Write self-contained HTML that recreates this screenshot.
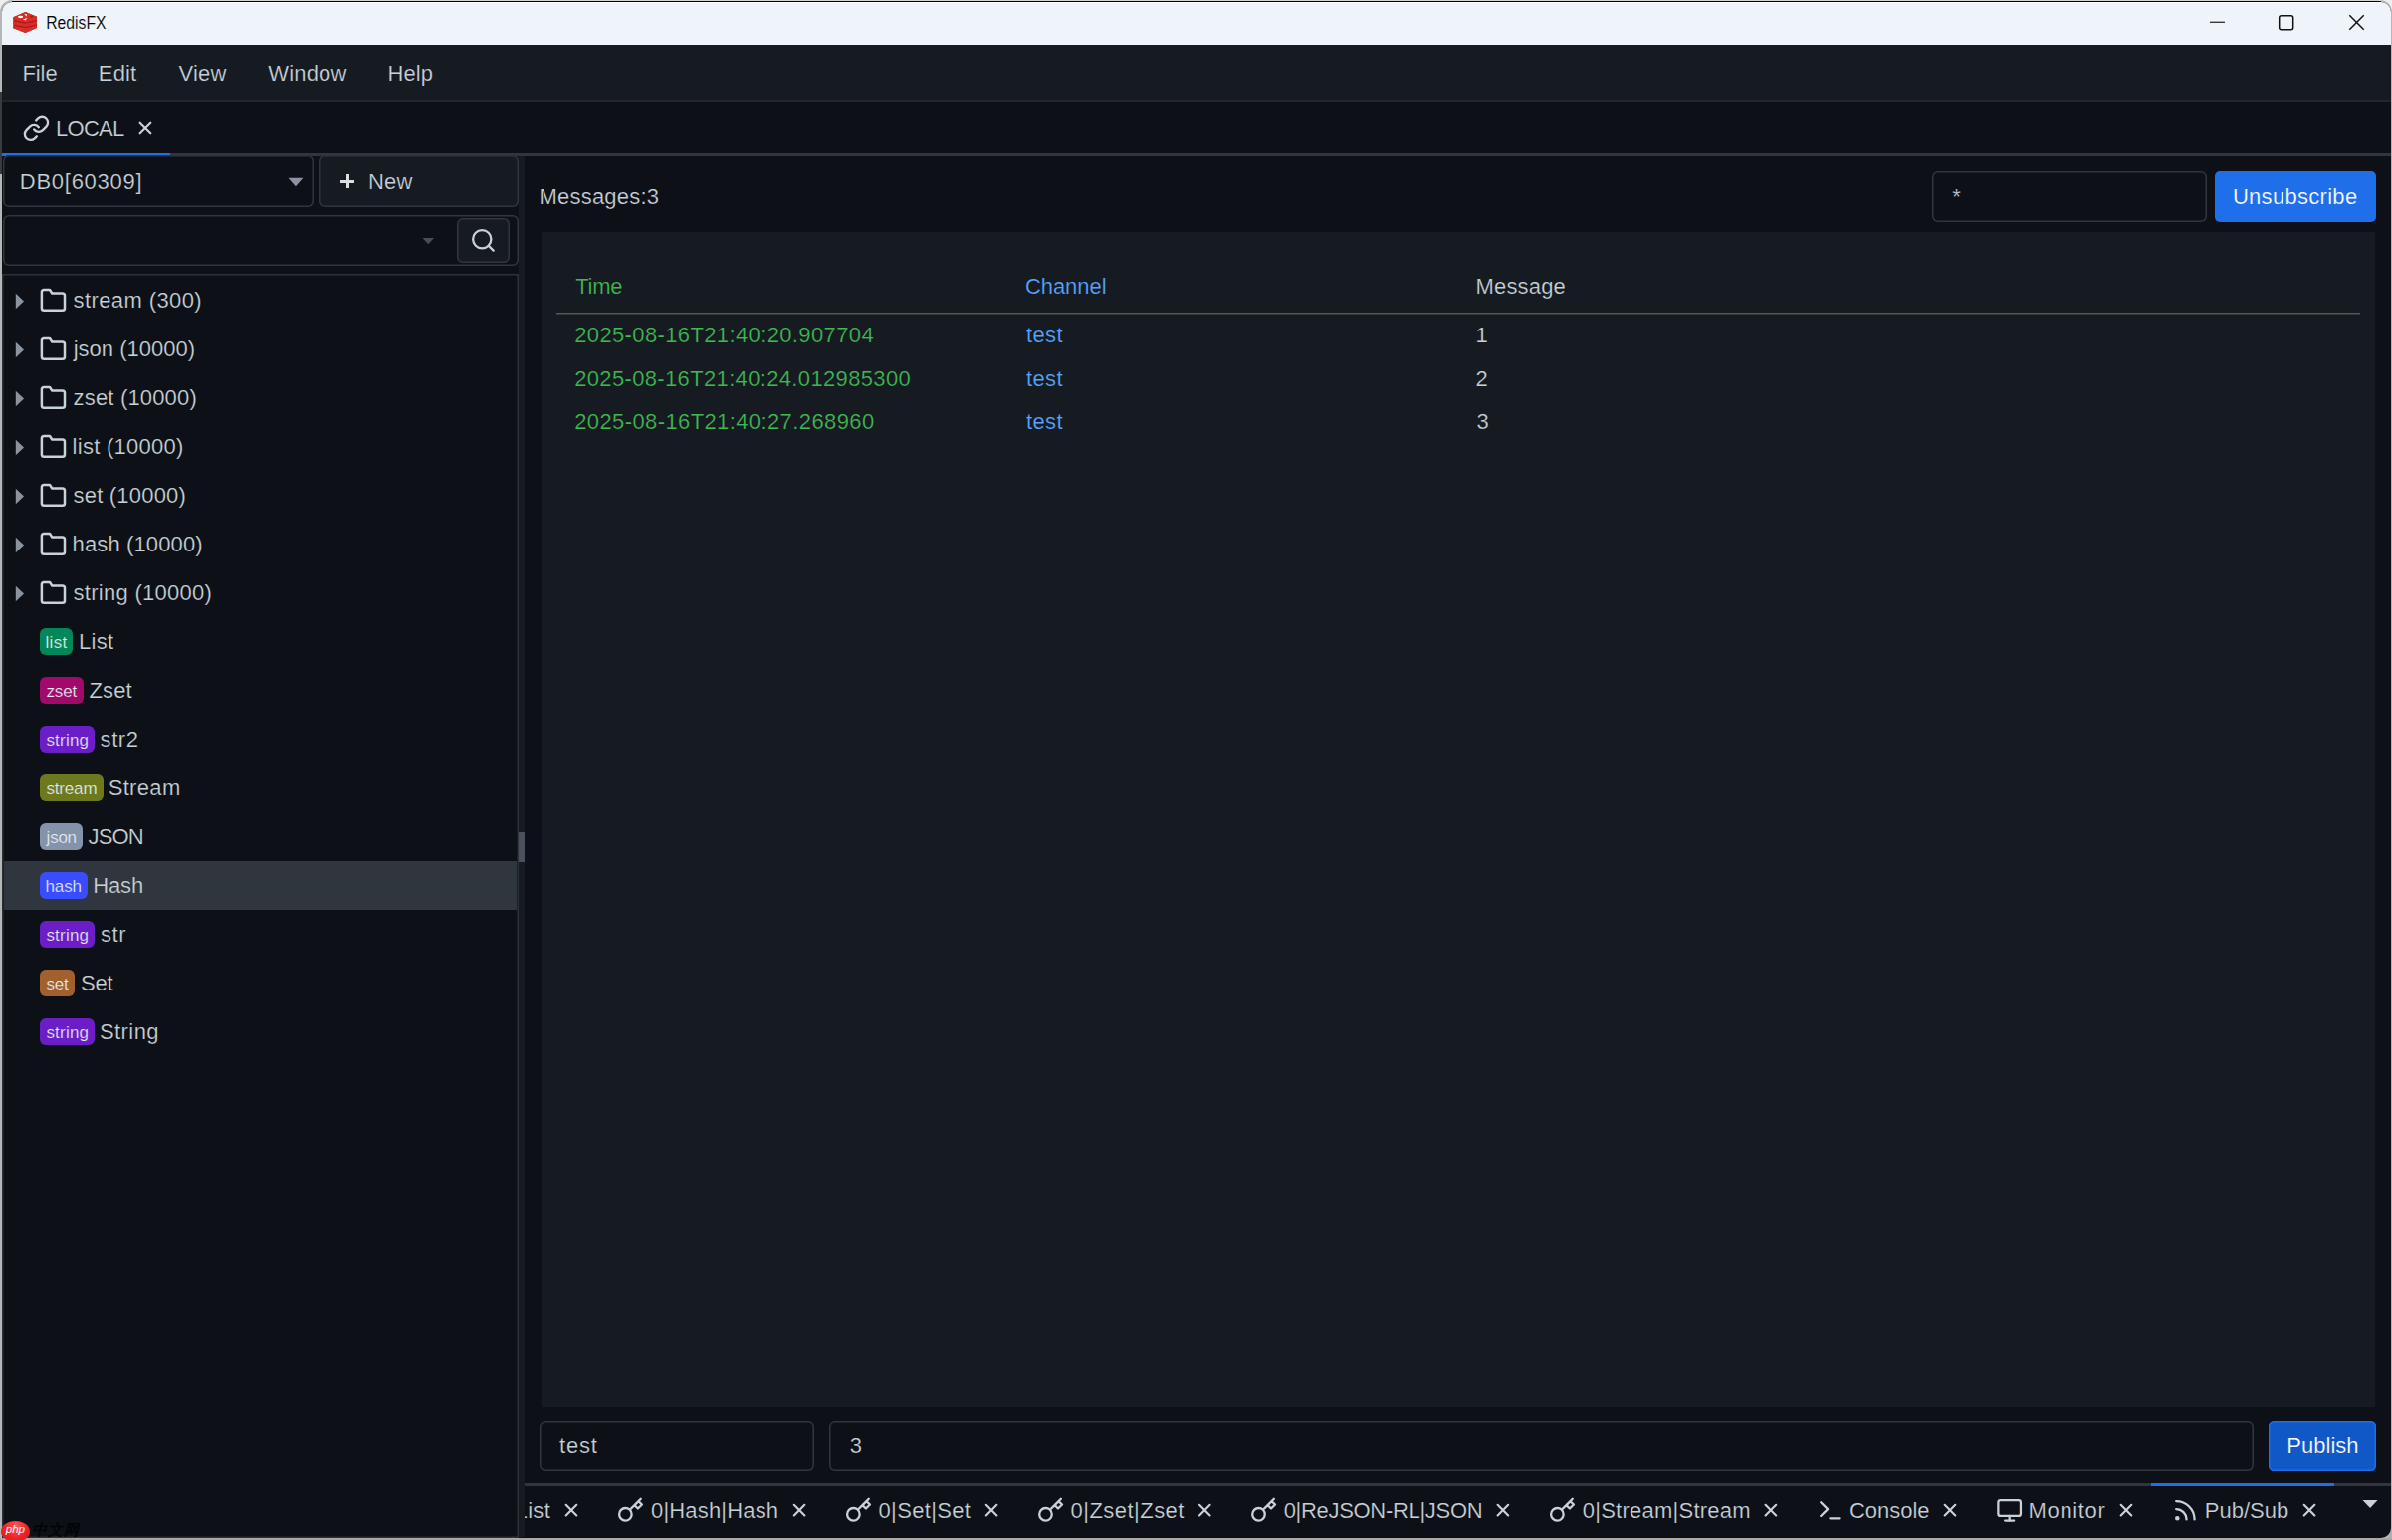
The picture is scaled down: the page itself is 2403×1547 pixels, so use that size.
<!DOCTYPE html>
<html lang="en"><head><meta charset="utf-8"><title>RedisFX</title><style>
html,body{margin:0;padding:0;background:#b0b0b0}
body{width:2403px;height:1547px;position:relative;overflow:hidden;font-family:"Liberation Sans",sans-serif}
.b{position:absolute;box-sizing:border-box}
.ic{position:absolute;display:block;overflow:visible}
.t{position:absolute;white-space:pre;line-height:1;display:block}
</style></head>
<body>
<div class="chrome">
<div class="b " style="left:0px;top:0px;width:14px;height:14px;background:#efefef"></div>
<div class="b " style="left:2389px;top:0px;width:14px;height:14px;background:#efefef"></div>
<div class="b frame" style="left:0px;top:0px;width:2403px;height:1547px;background:#b6b6b6;border-radius:12px 12px 11px 3px"></div>
<div class="b " style="left:0px;top:92px;width:2px;height:83px;background:#3a3b3d"></div>
<div class="b " style="left:12px;top:0px;width:2380px;height:1px;background:#d6d6d6"></div>
<div class="b " style="left:12px;top:1px;width:2380px;height:1px;background:#000"></div>
<div class="b win" style="left:2px;top:2px;width:2399.5px;height:1542.6px;background:#0d1117;border-radius:10px 10px 10px 2px;overflow:hidden"><div class="b titlebar" style="left:0px;top:0px;width:2400px;height:43px;background:#eff3fa"></div><div class="b " style="left:10px;top:0px;width:2380px;height:1px;background:#fff"></div><div class="b menubar" style="left:0px;top:43px;width:2400px;height:57px;background:#161b22"></div><div class="b " style="left:0px;top:98.4px;width:2400px;height:1.7999999999999972px;background:#21262d"></div></div>
</div>
<header class="titlebar">
<svg class="ic" style="left:12px;top:11px" width="26" height="23" viewBox="0 0 26 23">
<polygon points="1.3,6.3 13.5,1 25,5.8 25,17 13.5,22 1.3,17.3" fill="#a51e20"/>
<polygon points="1.3,6.3 13.5,1 25,5.8 25,8.9 13.5,11.5 1.3,9" fill="#da2c22"/>
<polygon points="1.3,10.3 13.5,12.8 25,10.2 25,13.3 13.5,15.9 1.3,13.4" fill="#d92d27"/>
<polygon points="1.3,14.7 13.5,17.2 25,14.6 25,17 13.5,22 1.3,17.3" fill="#d92d27"/>
<ellipse cx="8.6" cy="6" rx="2.7" ry="1.15" fill="#fff"/>
<polygon points="12.2,3.1 15.3,3.3 14.6,5.4" fill="#fbe9e8"/>
<polygon points="10.9,8.5 15.1,7 13.8,9.6" fill="#fff"/>
<ellipse cx="19.8" cy="5.7" rx="1.1" ry="0.8" fill="#7a1512"/>
</svg>
<svg class="ic" style="left:2210px;top:8px" width="180" height="30" viewBox="0 0 180 30" fill="none" stroke="#111" stroke-width="1.5">
<line x1="10" y1="14.25" x2="25" y2="14.25" stroke-width="1.15"/>
<rect x="79.7" y="7.7" width="14" height="14" rx="2"/>
<line x1="150.3" y1="7.3" x2="164.7" y2="21.7"/><line x1="164.7" y1="7.3" x2="150.3" y2="21.7"/>
</svg>
<span class="t " style="left:45.80px;top:14.00px;font-size:18px;color:#000;letter-spacing:0.000px;transform:scaleX(0.8748);transform-origin:1.00px 0;-webkit-text-stroke:0.15px #eff3fa;">RedisFX</span>
</header>
<nav class="menubar">
<span class="t menu" style="left:22.40px;top:63.00px;font-size:22px;color:#c9d1d9;letter-spacing:-0.071px;-webkit-text-stroke:0.22px #161b22;">File</span>
<span class="t menu" style="left:98.80px;top:63.00px;font-size:22px;color:#c9d1d9;letter-spacing:0.168px;-webkit-text-stroke:0.22px #161b22;">Edit</span>
<span class="t menu" style="left:179.60px;top:63.00px;font-size:22px;color:#c9d1d9;letter-spacing:0.134px;-webkit-text-stroke:0.22px #161b22;">View</span>
<span class="t menu" style="left:269.20px;top:63.00px;font-size:22px;color:#c9d1d9;letter-spacing:0.188px;-webkit-text-stroke:0.22px #161b22;">Window</span>
<span class="t menu" style="left:389.60px;top:63.00px;font-size:22px;color:#c9d1d9;letter-spacing:0.063px;-webkit-text-stroke:0.22px #161b22;">Help</span>
</nav>
<div class="connection-tabs">
<div class="b " style="left:2px;top:154px;width:2399.5px;height:3px;background:#30363d"></div>
<div class="b " style="left:2px;top:154px;width:169px;height:3px;background:#1f6feb"></div>
<svg class="ic" style="left:22px;top:115px" width="30" height="30" viewBox="0 0 30 30" fill="none" stroke="#c9d1d9" stroke-width="2" stroke-linecap="round" stroke-linejoin="round"><g transform="translate(0.50 0.35) scale(1.1667)"><path d="M10 13a5 5 0 0 0 7.54.54l3-3a5 5 0 0 0-7.07-7.07l-1.72 1.71"/><path d="M14 11a5 5 0 0 0-7.54-.54l-3 3a5 5 0 0 0 7.07 7.07l1.71-1.71"/></g></svg>
<svg class="ic" style="left:135px;top:118px" width="23" height="23" viewBox="0 0 23 23" fill="none" stroke="#c9d1d9" stroke-width="2.45" stroke-linecap="round" stroke-linejoin="round"><g transform="translate(0.28 0.33) scale(0.8893)"><line x1="18" y1="6" x2="6" y2="18"/><line x1="6" y1="6" x2="18" y2="18"/></g></svg>
<span class="t " style="left:56.00px;top:119.00px;font-size:22px;color:#c9d1d9;letter-spacing:-0.727px;-webkit-text-stroke:0.22px #0d1117;">LOCAL</span>
</div>
<aside class="sidebar">
<div class="b sel" style="left:3px;top:156px;width:312px;height:52px;box-shadow:inset 0 0 0 1.5px #30363d;border-radius:6px;background:#0d1117"></div>
<svg class="ic" style="left:289px;top:178px" width="16" height="10" viewBox="0 0 16 10"><polygon points="0.50,0.80 15.40,0.80 7.95,9.20" fill="#8d92a3"/></svg>
<div class="b btn" style="left:320px;top:156px;width:201px;height:52px;box-shadow:inset 0 0 0 1.5px #30363d;border-radius:6px;background:#161b22"></div>
<div class="b " style="left:348px;top:175px;width:3px;height:14.400000000000006px;background:#dddee0"></div>
<div class="b " style="left:342px;top:181px;width:14px;height:3px;background:#dddee0"></div>
<div class="b search" style="left:3px;top:216.2px;width:518px;height:50.60000000000002px;box-shadow:inset 0 0 0 1.5px #30363d;border-radius:6px;background:#0d1117"></div>
<div class="b btn" style="left:459px;top:219px;width:53px;height:45px;box-shadow:inset 0 0 0 1.5px #30363d;border-radius:6px;background:#161b22"></div>
<svg class="ic" style="left:471px;top:227px" width="30" height="30" viewBox="0 0 30 30" fill="none" stroke="#c9d1d9" stroke-width="2" stroke-linecap="round" stroke-linejoin="round"><g transform="translate(0.72 0.72) scale(1.1400)"><circle cx="11" cy="11" r="8"/><line x1="21" y1="21" x2="16.65" y2="16.65"/></g></svg>
<svg class="ic" style="left:424px;top:239px" width="12" height="7" viewBox="0 0 12 7"><polygon points="0.50,0.00 12.00,0.00 6.25,6.20" fill="#484d59"/></svg>
<div class="b tree" style="left:2px;top:275px;width:519px;height:1269.5px;box-shadow:inset 0 0 0 1.5px #2c3239;background:#0d1117"></div>
<div class="b selrow" style="left:4px;top:865px;width:515px;height:49px;background:#30363d"></div>
<div class="b split" style="left:521px;top:157px;width:6px;height:1387px;background:#161b22"></div>
<div class="b grab" style="left:521px;top:836px;width:6px;height:30px;background:#4a515c"></div>
<svg class="ic" style="left:15px;top:294px" width="9" height="17" viewBox="0 0 9 17"><polygon points="0.80,0.80 9.00,8.50 0.80,16.20" fill="#8b949e"/></svg>
<svg class="ic" style="left:39px;top:287px" width="30" height="30" viewBox="0 0 30 30" fill="none" stroke="#c9d1d9" stroke-width="2.15" stroke-linecap="round" stroke-linejoin="round"><g transform="translate(0.58 0.53) scale(1.1555)"><path d="M22 19a2 2 0 0 1-2 2H4a2 2 0 0 1-2-2V5a2 2 0 0 1 2-2h5l2 3h9a2 2 0 0 1 2 2z"/></g></svg>
<svg class="ic" style="left:15px;top:343px" width="9" height="17" viewBox="0 0 9 17"><polygon points="0.80,0.80 9.00,8.50 0.80,16.20" fill="#8b949e"/></svg>
<svg class="ic" style="left:39px;top:336px" width="30" height="30" viewBox="0 0 30 30" fill="none" stroke="#c9d1d9" stroke-width="2.15" stroke-linecap="round" stroke-linejoin="round"><g transform="translate(0.58 0.53) scale(1.1555)"><path d="M22 19a2 2 0 0 1-2 2H4a2 2 0 0 1-2-2V5a2 2 0 0 1 2-2h5l2 3h9a2 2 0 0 1 2 2z"/></g></svg>
<svg class="ic" style="left:15px;top:392px" width="9" height="17" viewBox="0 0 9 17"><polygon points="0.80,0.80 9.00,8.50 0.80,16.20" fill="#8b949e"/></svg>
<svg class="ic" style="left:39px;top:385px" width="30" height="30" viewBox="0 0 30 30" fill="none" stroke="#c9d1d9" stroke-width="2.15" stroke-linecap="round" stroke-linejoin="round"><g transform="translate(0.58 0.53) scale(1.1555)"><path d="M22 19a2 2 0 0 1-2 2H4a2 2 0 0 1-2-2V5a2 2 0 0 1 2-2h5l2 3h9a2 2 0 0 1 2 2z"/></g></svg>
<svg class="ic" style="left:15px;top:441px" width="9" height="17" viewBox="0 0 9 17"><polygon points="0.80,0.80 9.00,8.50 0.80,16.20" fill="#8b949e"/></svg>
<svg class="ic" style="left:39px;top:434px" width="30" height="30" viewBox="0 0 30 30" fill="none" stroke="#c9d1d9" stroke-width="2.15" stroke-linecap="round" stroke-linejoin="round"><g transform="translate(0.58 0.53) scale(1.1555)"><path d="M22 19a2 2 0 0 1-2 2H4a2 2 0 0 1-2-2V5a2 2 0 0 1 2-2h5l2 3h9a2 2 0 0 1 2 2z"/></g></svg>
<svg class="ic" style="left:15px;top:490px" width="9" height="17" viewBox="0 0 9 17"><polygon points="0.80,0.80 9.00,8.50 0.80,16.20" fill="#8b949e"/></svg>
<svg class="ic" style="left:39px;top:483px" width="30" height="30" viewBox="0 0 30 30" fill="none" stroke="#c9d1d9" stroke-width="2.15" stroke-linecap="round" stroke-linejoin="round"><g transform="translate(0.58 0.53) scale(1.1555)"><path d="M22 19a2 2 0 0 1-2 2H4a2 2 0 0 1-2-2V5a2 2 0 0 1 2-2h5l2 3h9a2 2 0 0 1 2 2z"/></g></svg>
<svg class="ic" style="left:15px;top:539px" width="9" height="17" viewBox="0 0 9 17"><polygon points="0.80,0.80 9.00,8.50 0.80,16.20" fill="#8b949e"/></svg>
<svg class="ic" style="left:39px;top:532px" width="30" height="30" viewBox="0 0 30 30" fill="none" stroke="#c9d1d9" stroke-width="2.15" stroke-linecap="round" stroke-linejoin="round"><g transform="translate(0.58 0.53) scale(1.1555)"><path d="M22 19a2 2 0 0 1-2 2H4a2 2 0 0 1-2-2V5a2 2 0 0 1 2-2h5l2 3h9a2 2 0 0 1 2 2z"/></g></svg>
<svg class="ic" style="left:15px;top:588px" width="9" height="17" viewBox="0 0 9 17"><polygon points="0.80,0.80 9.00,8.50 0.80,16.20" fill="#8b949e"/></svg>
<svg class="ic" style="left:39px;top:581px" width="30" height="30" viewBox="0 0 30 30" fill="none" stroke="#c9d1d9" stroke-width="2.15" stroke-linecap="round" stroke-linejoin="round"><g transform="translate(0.58 0.53) scale(1.1555)"><path d="M22 19a2 2 0 0 1-2 2H4a2 2 0 0 1-2-2V5a2 2 0 0 1 2-2h5l2 3h9a2 2 0 0 1 2 2z"/></g></svg>
<div class="b badge" style="left:40px;top:631.0px;width:33.400000000000006px;height:27.0px;background:#028858;border-radius:6px"></div>
<div class="b badge" style="left:40px;top:680.0px;width:43.8px;height:27.0px;background:#a10a6b;border-radius:6px"></div>
<div class="b badge" style="left:40px;top:729.0px;width:54.5px;height:27.0px;background:#6b1ec8;border-radius:6px"></div>
<div class="b badge" style="left:40px;top:778.0px;width:63.900000000000006px;height:27.0px;background:#6e781d;border-radius:6px"></div>
<div class="b badge" style="left:40px;top:827.0px;width:42.599999999999994px;height:27.0px;background:#8492aa;border-radius:6px"></div>
<div class="b badge" style="left:40px;top:876.0px;width:47.8px;height:27.0px;background:#3b4cff;border-radius:6px"></div>
<div class="b badge" style="left:40px;top:925.0px;width:54.5px;height:27.0px;background:#6b1ec8;border-radius:6px"></div>
<div class="b badge" style="left:40px;top:974.0px;width:35px;height:27.0px;background:#a3602f;border-radius:6px"></div>
<div class="b badge" style="left:40px;top:1023.0px;width:54.5px;height:27.0px;background:#6b1ec8;border-radius:6px"></div>
<span class="t " style="left:19.80px;top:172.00px;font-size:22px;color:#c9d1d9;letter-spacing:0.735px;-webkit-text-stroke:0.22px #0d1117;">DB0[60309]</span>
<span class="t " style="left:370.00px;top:172.00px;font-size:22px;color:#c9d1d9;letter-spacing:0.188px;-webkit-text-stroke:0.22px #161b22;">New</span>
<span class="t " style="left:73.60px;top:291.00px;font-size:22px;color:#c9d1d9;letter-spacing:0.393px;-webkit-text-stroke:0.22px #0d1117;">stream (300)</span>
<span class="t " style="left:73.70px;top:340.00px;font-size:22px;color:#c9d1d9;letter-spacing:0.011px;-webkit-text-stroke:0.22px #0d1117;">json (10000)</span>
<span class="t " style="left:73.60px;top:389.00px;font-size:22px;color:#c9d1d9;letter-spacing:0.167px;-webkit-text-stroke:0.22px #0d1117;">zset (10000)</span>
<span class="t " style="left:72.60px;top:438.00px;font-size:22px;color:#c9d1d9;letter-spacing:0.272px;-webkit-text-stroke:0.22px #0d1117;">list (10000)</span>
<span class="t " style="left:73.60px;top:487.00px;font-size:22px;color:#c9d1d9;letter-spacing:0.194px;-webkit-text-stroke:0.22px #0d1117;">set (10000)</span>
<span class="t " style="left:72.60px;top:536.00px;font-size:22px;color:#c9d1d9;letter-spacing:0.125px;-webkit-text-stroke:0.22px #0d1117;">hash (10000)</span>
<span class="t " style="left:73.60px;top:585.00px;font-size:22px;color:#c9d1d9;letter-spacing:0.268px;-webkit-text-stroke:0.22px #0d1117;">string (10000)</span>
<span class="t " style="left:45.40px;top:637.00px;font-size:17px;color:#e6edf3;letter-spacing:0.349px;-webkit-text-stroke:0.22px #028858;">list</span>
<span class="t " style="left:78.90px;top:634.00px;font-size:22px;color:#c9d1d9;letter-spacing:0.326px;-webkit-text-stroke:0.22px #0d1117;">List</span>
<span class="t " style="left:46.40px;top:686.00px;font-size:17px;color:#e6edf3;letter-spacing:-0.118px;-webkit-text-stroke:0.22px #a10a6b;">zset</span>
<span class="t " style="left:89.60px;top:683.00px;font-size:22px;color:#c9d1d9;letter-spacing:0.075px;-webkit-text-stroke:0.22px #0d1117;">Zset</span>
<span class="t " style="left:46.40px;top:735.00px;font-size:17px;color:#e6edf3;letter-spacing:0.217px;-webkit-text-stroke:0.22px #6b1ec8;">string</span>
<span class="t " style="left:100.60px;top:732.00px;font-size:22px;color:#c9d1d9;letter-spacing:0.554px;-webkit-text-stroke:0.22px #0d1117;">str2</span>
<span class="t " style="left:46.40px;top:784.00px;font-size:17px;color:#e6edf3;letter-spacing:-0.159px;-webkit-text-stroke:0.22px #6e781d;">stream</span>
<span class="t " style="left:108.70px;top:781.00px;font-size:22px;color:#c9d1d9;letter-spacing:0.323px;-webkit-text-stroke:0.22px #0d1117;">Stream</span>
<span class="t " style="left:46.60px;top:833.00px;font-size:17px;color:#e6edf3;letter-spacing:-0.244px;-webkit-text-stroke:0.22px #8492aa;">json</span>
<span class="t " style="left:88.50px;top:830.00px;font-size:22px;color:#c9d1d9;letter-spacing:-0.862px;-webkit-text-stroke:0.22px #0d1117;">JSON</span>
<span class="t " style="left:45.40px;top:882.00px;font-size:17px;color:#e6edf3;letter-spacing:-0.070px;-webkit-text-stroke:0.22px #3b4cff;">hash</span>
<span class="t " style="left:93.20px;top:879.00px;font-size:22px;color:#c9d1d9;letter-spacing:-0.141px;-webkit-text-stroke:0.22px #30363d;">Hash</span>
<span class="t " style="left:46.40px;top:931.00px;font-size:17px;color:#e6edf3;letter-spacing:0.217px;-webkit-text-stroke:0.22px #6b1ec8;">string</span>
<span class="t " style="left:101.00px;top:928.00px;font-size:22px;color:#c9d1d9;letter-spacing:0.594px;-webkit-text-stroke:0.22px #0d1117;">str</span>
<span class="t " style="left:46.40px;top:980.00px;font-size:17px;color:#e6edf3;letter-spacing:-0.177px;-webkit-text-stroke:0.22px #a3602f;">set</span>
<span class="t " style="left:81.00px;top:977.00px;font-size:22px;color:#c9d1d9;letter-spacing:-0.155px;-webkit-text-stroke:0.22px #0d1117;">Set</span>
<span class="t " style="left:46.40px;top:1029.00px;font-size:17px;color:#e6edf3;letter-spacing:0.217px;-webkit-text-stroke:0.22px #6b1ec8;">string</span>
<span class="t " style="left:100.00px;top:1026.00px;font-size:22px;color:#c9d1d9;letter-spacing:0.413px;-webkit-text-stroke:0.22px #0d1117;">String</span>
</aside>
<main class="pubsub-pane">
<div class="b input" style="left:1941px;top:172px;width:276px;height:51px;box-shadow:inset 0 0 0 1.5px #30363d;border-radius:6px;background:#0d1117"></div>
<div class="b btn" style="left:2225px;top:172px;width:162px;height:51px;background:#1f6feb;border-radius:5px"></div>
<div class="b table" style="left:544px;top:233px;width:1842px;height:1179.8px;background:#161b22"></div>
<div class="b " style="left:559px;top:314px;width:1812px;height:1px;background:#575757"></div>
<div class="b " style="left:559px;top:315px;width:1812px;height:1px;background:#33373b"></div>
<div class="b input" style="left:542px;top:1427px;width:276.29999999999995px;height:50.799999999999955px;box-shadow:inset 0 0 0 1.5px #30363d;border-radius:6px;background:#0d1117"></div>
<div class="b input" style="left:833px;top:1427px;width:1431px;height:50.799999999999955px;box-shadow:inset 0 0 0 1.5px #30363d;border-radius:6px;background:#0d1117"></div>
<div class="b btn" style="left:2279px;top:1427px;width:108px;height:51px;background:#1158c7;box-shadow:inset 0 0 0 1.5px #1f6feb;border-radius:5.5px"></div>
<span class="t " style="left:541.60px;top:187.00px;font-size:22px;color:#c9d1d9;letter-spacing:0.191px;-webkit-text-stroke:0.22px #0d1117;">Messages:3</span>
<span class="t " style="left:1961.30px;top:187.00px;font-size:22px;color:#c9d1d9;letter-spacing:0.000px;-webkit-text-stroke:0.22px #0d1117;">*</span>
<span class="t " style="left:2242.90px;top:187.00px;font-size:22px;color:#fff;letter-spacing:0.296px;-webkit-text-stroke:0.22px #1f6feb;">Unsubscribe</span>
<span class="t " style="left:578.20px;top:277.00px;font-size:22px;color:#3fb950;letter-spacing:-0.245px;-webkit-text-stroke:0.22px #161b22;">Time</span>
<span class="t " style="left:1029.90px;top:277.00px;font-size:22px;color:#58a6ff;letter-spacing:-0.044px;-webkit-text-stroke:0.22px #161b22;">Channel</span>
<span class="t " style="left:1482.50px;top:277.00px;font-size:22px;color:#c9d1d9;letter-spacing:0.178px;-webkit-text-stroke:0.22px #161b22;">Message</span>
<span class="t " style="left:577.20px;top:326.00px;font-size:22px;color:#3fb950;letter-spacing:0.372px;-webkit-text-stroke:0.22px #161b22;">2025-08-16T21:40:20.907704</span>
<span class="t " style="left:1030.90px;top:326.00px;font-size:22px;color:#58a6ff;letter-spacing:0.417px;-webkit-text-stroke:0.22px #161b22;">test</span>
<span class="t " style="left:1482.50px;top:326.00px;font-size:22px;color:#c9d1d9;letter-spacing:0.000px;-webkit-text-stroke:0.22px #161b22;">1</span>
<span class="t " style="left:577.20px;top:370.00px;font-size:22px;color:#3fb950;letter-spacing:0.346px;-webkit-text-stroke:0.22px #161b22;">2025-08-16T21:40:24.012985300</span>
<span class="t " style="left:1030.90px;top:370.00px;font-size:22px;color:#58a6ff;letter-spacing:0.417px;-webkit-text-stroke:0.22px #161b22;">test</span>
<span class="t " style="left:1482.50px;top:370.00px;font-size:22px;color:#c9d1d9;letter-spacing:0.000px;-webkit-text-stroke:0.22px #161b22;">2</span>
<span class="t " style="left:577.20px;top:413.00px;font-size:22px;color:#3fb950;letter-spacing:0.392px;-webkit-text-stroke:0.22px #161b22;">2025-08-16T21:40:27.268960</span>
<span class="t " style="left:1030.90px;top:413.00px;font-size:22px;color:#58a6ff;letter-spacing:0.417px;-webkit-text-stroke:0.22px #161b22;">test</span>
<span class="t " style="left:1483.50px;top:413.00px;font-size:22px;color:#c9d1d9;letter-spacing:0.000px;-webkit-text-stroke:0.22px #161b22;">3</span>
<span class="t " style="left:562.00px;top:1442.00px;font-size:22px;color:#c9d1d9;letter-spacing:0.784px;-webkit-text-stroke:0.22px #0d1117;">test</span>
<span class="t " style="left:853.70px;top:1442.00px;font-size:22px;color:#c9d1d9;letter-spacing:0.000px;-webkit-text-stroke:0.22px #0d1117;">3</span>
<span class="t " style="left:2297.30px;top:1442.00px;font-size:22px;color:#fff;letter-spacing:0.013px;-webkit-text-stroke:0.22px #1158c7;">Publish</span>
</main>
<footer class="key-tabs">
<div class="b " style="left:527px;top:1490px;width:1874.5px;height:3px;background:#30363d"></div>
<div class="b " style="left:2161px;top:1490px;width:184.0999999999999px;height:3px;background:#1f6feb"></div>
<svg class="ic" style="left:563px;top:1506px" width="23" height="23" viewBox="0 0 23 23" fill="none" stroke="#c9d1d9" stroke-width="2.45" stroke-linecap="round" stroke-linejoin="round"><g transform="translate(0.41 0.56) scale(0.8821)"><line x1="18" y1="6" x2="6" y2="18"/><line x1="6" y1="6" x2="18" y2="18"/></g></svg>
<svg class="ic" style="left:619px;top:1503px" width="30" height="29" viewBox="0 0 30 29" fill="none" stroke="#c9d1d9" stroke-width="2" stroke-linecap="round" stroke-linejoin="round"><g transform="translate(0.75 0.50) scale(1.1431)"><path d="M21 2l-2 2m-7.61 7.61a5.5 5.5 0 1 1-7.778 7.778 5.5 5.5 0 0 1 7.777-7.777zm0 0L15.5 7.5m0 0l3 3L22 7l-3-3m-3.5 3.5L19 4"/></g></svg>
<svg class="ic" style="left:792px;top:1506px" width="23" height="23" viewBox="0 0 23 23" fill="none" stroke="#c9d1d9" stroke-width="2.45" stroke-linecap="round" stroke-linejoin="round"><g transform="translate(0.51 0.56) scale(0.8821)"><line x1="18" y1="6" x2="6" y2="18"/><line x1="6" y1="6" x2="18" y2="18"/></g></svg>
<svg class="ic" style="left:848px;top:1503px" width="30" height="29" viewBox="0 0 30 29" fill="none" stroke="#c9d1d9" stroke-width="2" stroke-linecap="round" stroke-linejoin="round"><g transform="translate(0.75 0.50) scale(1.1431)"><path d="M21 2l-2 2m-7.61 7.61a5.5 5.5 0 1 1-7.778 7.778 5.5 5.5 0 0 1 7.777-7.777zm0 0L15.5 7.5m0 0l3 3L22 7l-3-3m-3.5 3.5L19 4"/></g></svg>
<svg class="ic" style="left:985px;top:1506px" width="23" height="23" viewBox="0 0 23 23" fill="none" stroke="#c9d1d9" stroke-width="2.45" stroke-linecap="round" stroke-linejoin="round"><g transform="translate(0.51 0.56) scale(0.8821)"><line x1="18" y1="6" x2="6" y2="18"/><line x1="6" y1="6" x2="18" y2="18"/></g></svg>
<svg class="ic" style="left:1041px;top:1503px" width="30" height="29" viewBox="0 0 30 29" fill="none" stroke="#c9d1d9" stroke-width="2" stroke-linecap="round" stroke-linejoin="round"><g transform="translate(0.85 0.50) scale(1.1431)"><path d="M21 2l-2 2m-7.61 7.61a5.5 5.5 0 1 1-7.778 7.778 5.5 5.5 0 0 1 7.777-7.777zm0 0L15.5 7.5m0 0l3 3L22 7l-3-3m-3.5 3.5L19 4"/></g></svg>
<svg class="ic" style="left:1199px;top:1506px" width="23" height="23" viewBox="0 0 23 23" fill="none" stroke="#c9d1d9" stroke-width="2.45" stroke-linecap="round" stroke-linejoin="round"><g transform="translate(0.71 0.56) scale(0.8821)"><line x1="18" y1="6" x2="6" y2="18"/><line x1="6" y1="6" x2="18" y2="18"/></g></svg>
<svg class="ic" style="left:1255px;top:1503px" width="30" height="29" viewBox="0 0 30 29" fill="none" stroke="#c9d1d9" stroke-width="2" stroke-linecap="round" stroke-linejoin="round"><g transform="translate(0.85 0.50) scale(1.1431)"><path d="M21 2l-2 2m-7.61 7.61a5.5 5.5 0 1 1-7.778 7.778 5.5 5.5 0 0 1 7.777-7.777zm0 0L15.5 7.5m0 0l3 3L22 7l-3-3m-3.5 3.5L19 4"/></g></svg>
<svg class="ic" style="left:1499px;top:1506px" width="23" height="23" viewBox="0 0 23 23" fill="none" stroke="#c9d1d9" stroke-width="2.45" stroke-linecap="round" stroke-linejoin="round"><g transform="translate(0.31 0.56) scale(0.8821)"><line x1="18" y1="6" x2="6" y2="18"/><line x1="6" y1="6" x2="18" y2="18"/></g></svg>
<svg class="ic" style="left:1555px;top:1503px" width="30" height="29" viewBox="0 0 30 29" fill="none" stroke="#c9d1d9" stroke-width="2" stroke-linecap="round" stroke-linejoin="round"><g transform="translate(0.75 0.50) scale(1.1431)"><path d="M21 2l-2 2m-7.61 7.61a5.5 5.5 0 1 1-7.778 7.778 5.5 5.5 0 0 1 7.777-7.777zm0 0L15.5 7.5m0 0l3 3L22 7l-3-3m-3.5 3.5L19 4"/></g></svg>
<svg class="ic" style="left:1768px;top:1506px" width="23" height="23" viewBox="0 0 23 23" fill="none" stroke="#c9d1d9" stroke-width="2.45" stroke-linecap="round" stroke-linejoin="round"><g transform="translate(0.31 0.56) scale(0.8821)"><line x1="18" y1="6" x2="6" y2="18"/><line x1="6" y1="6" x2="18" y2="18"/></g></svg>
<svg class="ic" style="left:1824px;top:1503px" width="30" height="30" viewBox="0 0 30 30" fill="none" stroke="#c9d1d9" stroke-width="2" stroke-linecap="round" stroke-linejoin="round"><g transform="translate(0.61 0.46) scale(1.1490)"><polyline points="4 17 10 11 4 5"/><line x1="12" y1="19" x2="20" y2="19"/></g></svg>
<svg class="ic" style="left:1948px;top:1506px" width="23" height="23" viewBox="0 0 23 23" fill="none" stroke="#c9d1d9" stroke-width="2.45" stroke-linecap="round" stroke-linejoin="round"><g transform="translate(0.41 0.56) scale(0.8821)"><line x1="18" y1="6" x2="6" y2="18"/><line x1="6" y1="6" x2="18" y2="18"/></g></svg>
<svg class="ic" style="left:2005px;top:1503px" width="29" height="29" viewBox="0 0 29 29" fill="none" stroke="#c9d1d9" stroke-width="2" stroke-linecap="round" stroke-linejoin="round"><g transform="translate(0.11 0.81) scale(1.1284)"><rect x="2" y="3" width="20" height="14" rx="2" ry="2"/><line x1="8" y1="21" x2="16" y2="21"/><line x1="12" y1="17" x2="12" y2="21"/></g></svg>
<svg class="ic" style="left:2125px;top:1506px" width="23" height="23" viewBox="0 0 23 23" fill="none" stroke="#c9d1d9" stroke-width="2.45" stroke-linecap="round" stroke-linejoin="round"><g transform="translate(0.41 0.56) scale(0.8821)"><line x1="18" y1="6" x2="6" y2="18"/><line x1="6" y1="6" x2="18" y2="18"/></g></svg>
<svg class="ic" style="left:2181px;top:1503px" width="30" height="30" viewBox="0 0 30 30" fill="none" stroke="#c9d1d9" stroke-width="2" stroke-linecap="round" stroke-linejoin="round"><g transform="translate(0.55 0.45) scale(1.1500)"><path d="M4 11a9 9 0 0 1 9 9"/><path d="M4 4a16 16 0 0 1 16 16"/><circle cx="5" cy="19" r="1"/></g></svg>
<svg class="ic" style="left:2309px;top:1506px" width="23" height="23" viewBox="0 0 23 23" fill="none" stroke="#c9d1d9" stroke-width="2.45" stroke-linecap="round" stroke-linejoin="round"><g transform="translate(0.42 0.52) scale(0.8857)"><line x1="18" y1="6" x2="6" y2="18"/><line x1="6" y1="6" x2="18" y2="18"/></g></svg>
<svg class="ic" style="left:2373px;top:1507px" width="16" height="9" viewBox="0 0 16 9"><polygon points="0.50,0.00 15.60,0.00 8.05,8.10" fill="#c9d1d9"/></svg>
<span class="t " style="left:517.60px;top:1507.00px;font-size:22px;color:#c9d1d9;letter-spacing:0.326px;-webkit-text-stroke:0.22px #0d1117;clip-path:inset(-5px -5px -5px 9.40px);">List</span>
<span class="t " style="left:654.00px;top:1507.00px;font-size:22px;color:#c9d1d9;letter-spacing:0.165px;-webkit-text-stroke:0.22px #0d1117;">0|Hash|Hash</span>
<span class="t " style="left:882.50px;top:1507.00px;font-size:22px;color:#c9d1d9;letter-spacing:0.338px;-webkit-text-stroke:0.22px #0d1117;">0|Set|Set</span>
<span class="t " style="left:1075.50px;top:1507.00px;font-size:22px;color:#c9d1d9;letter-spacing:0.467px;-webkit-text-stroke:0.22px #0d1117;">0|Zset|Zset</span>
<span class="t " style="left:1289.70px;top:1507.00px;font-size:22px;color:#c9d1d9;letter-spacing:-0.313px;-webkit-text-stroke:0.22px #0d1117;">0|ReJSON-RL|JSON</span>
<span class="t " style="left:1589.70px;top:1507.00px;font-size:22px;color:#c9d1d9;letter-spacing:0.246px;-webkit-text-stroke:0.22px #0d1117;">0|Stream|Stream</span>
<span class="t " style="left:1858.00px;top:1507.00px;font-size:22px;color:#c9d1d9;letter-spacing:-0.030px;-webkit-text-stroke:0.22px #0d1117;">Console</span>
<span class="t " style="left:2037.60px;top:1507.00px;font-size:22px;color:#c9d1d9;letter-spacing:0.628px;-webkit-text-stroke:0.22px #0d1117;">Monitor</span>
<span class="t " style="left:2214.80px;top:1507.00px;font-size:22px;color:#c9d1d9;letter-spacing:0.006px;-webkit-text-stroke:0.22px #0d1117;">Pub/Sub</span>
</footer>
<div class="overlay">
<div class="b " style="left:0px;top:1545px;width:2403px;height:2px;background:#a8a8a8"></div>
<div class="b wm" style="left:1px;top:1528px;width:29px;height:21px;background:radial-gradient(ellipse at 50% 25%,#ff5a5a 0%,#ee2226 55%,#d8161b 100%);border-radius:50%"></div>
<span class="t " style="left:5.80px;top:1531.00px;font-size:11.5px;color:#fff;letter-spacing:0.004px;font-style:italic;">php</span>
<span class="t " style="left:32.00px;top:1529.00px;font-size:15px;color:#030507;letter-spacing:1.000px;font-weight:700;font-style:italic;font-family:"Liberation Sans","Noto Sans CJK SC",sans-serif;">中文网</span>
</div>
</body></html>
